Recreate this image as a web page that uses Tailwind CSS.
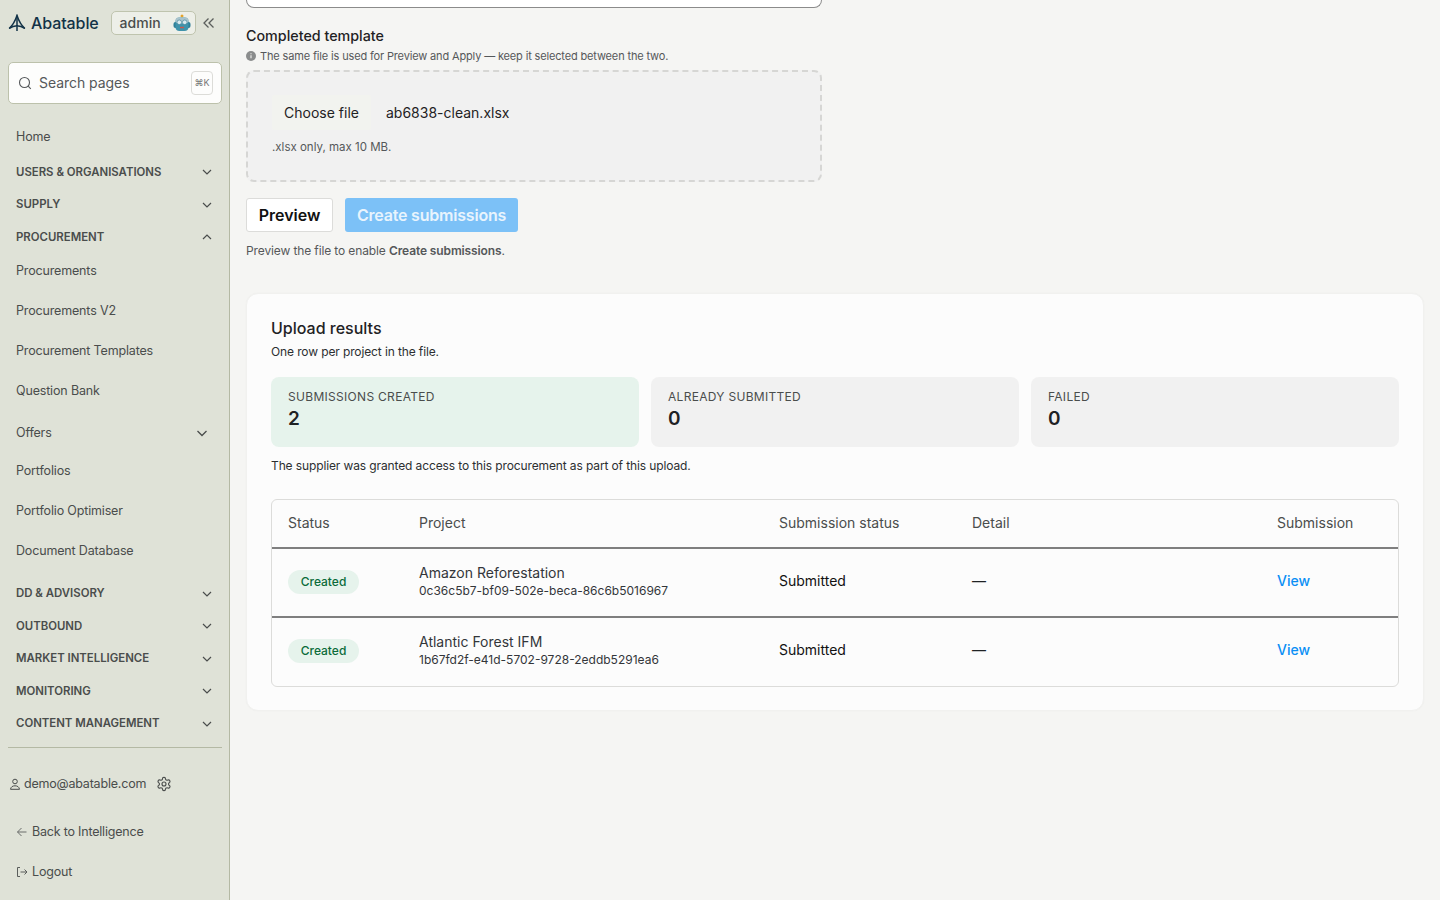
<!DOCTYPE html>
<html lang="en"><head><meta charset="utf-8"><title>Upload results</title>
<script src="https://cdn.jsdelivr.net/npm/@tailwindcss/browser@4"></script></head>
<body class="m-0 bg-[#f5f5f3] font-['Inter',sans-serif] text-[#1f2224]">
<div class="flex h-[900px] w-[1440px] overflow-hidden">
<aside class="flex h-full w-[230px] shrink-0 flex-col border-r border-[#b4b9a4] bg-[#dfe2d7] text-[#4a4d4c]">
  <div class="flex h-[46px] items-center pl-2 pr-3">
    <svg class="h-[18px] w-[18px] shrink-0" viewBox="0 0 18 18" fill="none" stroke="#123247" stroke-width="1.500"><path d="M1.200 14.500C4.500 11.500 7.500 6 9 1.500c1.500 4.500 4.500 10 7.800 13"/><path d="M1.200 14.500C4 12.500 6.500 11.800 9 11.800s5 .7 7.800 2.700"/><path d="M9 1.500V17"/></svg>
    <span class="ml-[5px] text-[16px] font-medium tracking-[-0.1px] text-[#123247]">Abatable</span>
    <div class="ml-[12px] flex h-[24px] w-[85px] items-center justify-between rounded-[5px] border border-[#bfc4ae] bg-[#edefe8] pb-[1px] pl-[8px] pr-[4px] text-[14px] font-medium text-[#4a4d4c]">admin
      <svg class="h-[18px] w-[18px]" viewBox="0 0 18 18"><circle cx="9" cy="2" r="1.500" fill="#e3a32b"/><rect x="0.500" y="8" width="17" height="6" rx="2" fill="#2e7f97"/><rect x="2.500" y="3.500" width="13" height="13.500" rx="4" fill="#3f93ab"/><rect x="2.500" y="3.500" width="13" height="6" rx="3" fill="#a9c3cc"/><circle cx="6.300" cy="8.300" r="2.300" fill="#dcebf0" stroke="#3b7f94" stroke-width=".6"/><circle cx="11.700" cy="8.300" r="2.300" fill="#dcebf0" stroke="#3b7f94" stroke-width=".6"/><path d="M7 13.500h4" stroke="#c9584c" stroke-width="1.400"/></svg>
    </div>
    <svg class="ml-[6px] h-[14px] w-[14px]" viewBox="0 0 14 14" fill="none" stroke="#5b5e5c" stroke-width="1.300"><path d="M6.500 2.500 2 7l4.500 4.500M11.500 2.500 7 7l4.500 4.500"/></svg>
  </div>
  <div class="mt-4 mr-[7px] ml-2 flex h-[42px] items-center rounded-[5px] border border-[#bcc1ab] bg-[#fdfdfc] pl-[9px] pr-2">
    <svg class="h-[14px] w-[14px]" viewBox="0 0 14 14" fill="none" stroke="#55585a" stroke-width="1.100"><circle cx="6.500" cy="6.500" r="5"/><path d="m10.200 10.200 2.600 2.600"/></svg>
    <span class="mb-[2px] ml-[7px] text-[14px] tracking-[-0.05px] text-[#55585a]">Search pages</span>
    <span class="ml-auto flex h-[24px] w-[22px] items-center justify-center rounded-[4px] border border-[#dcdcd8] text-[9px] text-[#777]">⌘K</span>
  </div>
  <nav class="mt-3 flex flex-col text-[12.500px] tracking-[-0.16px]">
    <a class="flex h-10 items-center pt-[2px] pl-4">Home</a>
    <div class="flex h-[32.500px] items-center justify-between pr-[15px] pl-4 text-[11.400px] font-semibold tracking-normal">USERS &amp; ORGANISATIONS<svg class="h-[14px] w-[14px]" viewBox="0 0 14 14" fill="none" stroke="#4a4d4c" stroke-width="1.200"><path d="m3 5 4 4 4-4"/></svg></div>
    <div class="flex h-[32.500px] items-center justify-between pr-[15px] pl-4 text-[11.400px] font-semibold tracking-normal">SUPPLY<svg class="h-[14px] w-[14px]" viewBox="0 0 14 14" fill="none" stroke="#4a4d4c" stroke-width="1.200"><path d="m3 5 4 4 4-4"/></svg></div>
    <div class="flex h-[32.500px] items-center justify-between pr-[15px] pl-4 text-[11.400px] font-semibold tracking-normal">PROCUREMENT<svg class="h-[14px] w-[14px]" viewBox="0 0 14 14" fill="none" stroke="#4a4d4c" stroke-width="1.200"><path d="m3 9 4-4 4 4"/></svg></div>
    <div class="-mt-[2px] flex flex-col">
      <a class="flex h-10 items-center pl-4">Procurements</a>
      <a class="flex h-10 items-center pl-4">Procurements V2</a>
      <a class="flex h-10 items-center pl-4">Procurement Templates</a>
      <a class="flex h-10 items-center pl-4">Question Bank</a>
      <a class="mt-[2px] -mb-[2px] flex h-10 items-center justify-between pr-[19px] pl-4">Offers<svg class="mb-[2px] h-[16px] w-[16px]" viewBox="0 0 16 16" fill="none" stroke="#4a4d4c" stroke-width="1.300"><path d="m3.500 6 4.500 4.500L12.500 6"/></svg></a>
      <a class="flex h-10 items-center pl-4">Portfolios</a>
      <a class="flex h-10 items-center pl-4">Portfolio Optimiser</a>
      <a class="flex h-10 items-center pl-4">Document Database</a>
    </div>
    <div class="mt-[6px] flex flex-col">
      <div class="flex h-[32.500px] items-center justify-between pr-[15px] pl-4 text-[11.400px] font-semibold tracking-normal">DD &amp; ADVISORY<svg class="h-[14px] w-[14px]" viewBox="0 0 14 14" fill="none" stroke="#4a4d4c" stroke-width="1.200"><path d="m3 5 4 4 4-4"/></svg></div>
      <div class="flex h-[32.500px] items-center justify-between pr-[15px] pl-4 text-[11.400px] font-semibold tracking-normal">OUTBOUND<svg class="h-[14px] w-[14px]" viewBox="0 0 14 14" fill="none" stroke="#4a4d4c" stroke-width="1.200"><path d="m3 5 4 4 4-4"/></svg></div>
      <div class="flex h-[32.500px] items-center justify-between pr-[15px] pl-4 text-[11.400px] font-semibold tracking-normal">MARKET INTELLIGENCE<svg class="h-[14px] w-[14px]" viewBox="0 0 14 14" fill="none" stroke="#4a4d4c" stroke-width="1.200"><path d="m3 5 4 4 4-4"/></svg></div>
      <div class="flex h-[32.500px] items-center justify-between pr-[15px] pl-4 text-[11.400px] font-semibold tracking-normal">MONITORING<svg class="h-[14px] w-[14px]" viewBox="0 0 14 14" fill="none" stroke="#4a4d4c" stroke-width="1.200"><path d="m3 5 4 4 4-4"/></svg></div>
      <div class="flex h-[32.500px] items-center justify-between pr-[15px] pl-4 text-[11.400px] font-semibold tracking-normal">CONTENT MANAGEMENT<svg class="h-[14px] w-[14px]" viewBox="0 0 14 14" fill="none" stroke="#4a4d4c" stroke-width="1.200"><path d="m3 5 4 4 4-4"/></svg></div>
    </div>
  </nav>
  <div class="mt-[7px] mr-[7px] ml-2 border-t border-[#b4b9a4]"></div>
  <div class="mt-[22px] flex h-[28px] items-center pl-2 text-[12.500px] tracking-[-0.2px]">
    <svg class="h-[14px] w-[14px]" viewBox="0 0 14 14" fill="none" stroke="#4a4d4c" stroke-width="1"><circle cx="7" cy="4.500" r="2.300"/><path d="M2.500 12.300c.4-2.500 2.200-3.500 4.500-3.500s4.100 1 4.500 3.500z"/></svg>
    <span class="ml-[2px]">demo@abatable.com</span>
    <svg class="ml-[10px] h-[16px] w-[16px]" viewBox="0 0 24 24" fill="none" stroke="#4a4d4c" stroke-width="1.700" stroke-linecap="round" stroke-linejoin="round"><path d="M12.220 2h-.44a2 2 0 0 0-2 2v.18a2 2 0 0 1-1 1.730l-.43.250a2 2 0 0 1-2 0l-.150-.080a2 2 0 0 0-2.730.730l-.220.380a2 2 0 0 0 .730 2.730l.150.100a2 2 0 0 1 1 1.720v.510a2 2 0 0 1-1 1.740l-.150.090a2 2 0 0 0-.730 2.730l.220.380a2 2 0 0 0 2.730.730l.150-.080a2 2 0 0 1 2 0l.430.250a2 2 0 0 1 1 1.730V20a2 2 0 0 0 2 2h.440a2 2 0 0 0 2-2v-.180a2 2 0 0 1 1-1.730l.430-.250a2 2 0 0 1 2 0l.150.080a2 2 0 0 0 2.730-.730l.220-.390a2 2 0 0 0-.730-2.730l-.150-.080a2 2 0 0 1-1-1.740v-.500a2 2 0 0 1 1-1.740l.150-.090a2 2 0 0 0 .730-2.730l-.220-.380a2 2 0 0 0-2.730-.730l-.150.080a2 2 0 0 1-2 0l-.430-.250a2 2 0 0 1-1-1.730V4a2 2 0 0 0-2-2z"/><circle cx="12" cy="12" r="3"/></svg>
  </div>
  <a class="mt-[14px] flex h-10 items-center pl-4 text-[12.500px] tracking-[-0.2px]"><svg class="h-[12px] w-[12px]" viewBox="0 0 12 12" fill="none" stroke="#6a6d6b" stroke-width="1"><path d="M10.500 6h-9M5.500 2l-4 4 4 4"/></svg><span class="ml-[4px]">Back to Intelligence</span></a>
  <a class="flex h-10 items-center pl-4 text-[12.500px] tracking-[-0.16px]"><svg class="h-[12px] w-[12px]" viewBox="0 0 12 12" fill="none" stroke="#5a5d5b" stroke-width="1"><path d="M4 1.500H1.500v9H4M4.500 6H11M8.500 3.500 11 6l-2.500 2.500"/></svg><span class="ml-[4px]">Logout</span></a>
</aside>
<main class="min-w-0 flex-1 px-4">
  <div class="h-2 w-[576px] rounded-b-[8px] border border-t-0 border-[#8b8b8b] bg-white"></div>
  <h3 class="mt-[19px] text-[14.300px] leading-[18px] font-medium">Completed template</h3>
  <p class="mt-[2px] flex h-[18px] items-center text-[11px] tracking-[-0.15px] text-[#55585a]"><svg class="mr-[4px] h-[10px] w-[10px]" viewBox="0 0 10 10"><circle cx="5" cy="5" r="5" fill="#8a8c8c"/><path d="M5 4.300v3M5 2.300v1" stroke="#f5f5f3" stroke-width="1.100"/></svg>The same file is used for Preview and Apply — keep it selected between the two.</p>
  <div class="mt-[5px] h-[112px] w-[576px] rounded-[8px] border-2 border-dashed border-[#d6d6d4] bg-[#f1f1f1] pl-[24px]">
    <div class="mt-[23px] flex items-center">
      <span class="flex h-[35px] w-[99px] items-center justify-center rounded-[2px] bg-[#f2f3ef] text-[14px] text-[#1f2224]">Choose file</span>
      <span class="ml-[15px] text-[14px] text-[#1f2224]">ab6838-clean.xlsx</span>
    </div>
    <p class="mt-[8px] text-[11.500px] leading-[18px] text-[#55585a]">.xlsx only, max 10 MB.</p>
  </div>
  <div class="mt-4 flex gap-3">
    <button class="h-[34px] w-[87px] rounded-[3px] border border-[#dcdcda] bg-white text-[16px] font-semibold text-[#111]">Preview</button>
    <button class="h-[34px] w-[173px] rounded-[3px] bg-[#7cc1f7] text-[16px] font-semibold tracking-[-0.2px] text-[#e8f4fd]">Create submissions</button>
  </div>
  <p class="mt-[10px] text-[12px] leading-[18px] tracking-[-0.12px] text-[#55585a]">Preview the file to enable <b class="font-semibold">Create submissions</b>.</p>
  <section class="mt-[33px] h-[418px] rounded-[12px] border border-[#f1f1ef] bg-[#fcfcfc] px-6 pt-[23px] shadow-[0_0_2px_rgba(0,0,0,0.03)]">
    <h2 class="text-[16px] leading-[22px] font-medium">Upload results</h2>
    <p class="mt-[4px] text-[12px] leading-[18px] tracking-[-0.12px] text-[#2c2f31]">One row per project in the file.</p>
    <div class="mt-4 grid grid-cols-3 gap-3">
      <div class="h-[70px] rounded-[8px] bg-[#e6f3ec] px-[17px] pt-[12px]"><div class="text-[12px] leading-[16px] tracking-[0.3px] text-[#4a4d4c]">SUBMISSIONS CREATED</div><div class="mt-[2px] text-[19px] leading-[24px] font-semibold">2</div></div>
      <div class="h-[70px] rounded-[8px] bg-[#f1f1f1] px-[17px] pt-[12px]"><div class="text-[12px] leading-[16px] tracking-[0.3px] text-[#4a4d4c]">ALREADY SUBMITTED</div><div class="mt-[2px] text-[19px] leading-[24px] font-semibold">0</div></div>
      <div class="h-[70px] rounded-[8px] bg-[#f1f1f1] px-[17px] pt-[12px]"><div class="text-[12px] leading-[16px] tracking-[0.3px] text-[#4a4d4c]">FAILED</div><div class="mt-[2px] text-[19px] leading-[24px] font-semibold">0</div></div>
    </div>
    <p class="mt-[10px] text-[12px] leading-[18px] tracking-[-0.12px] text-[#2c2f31]">The supplier was granted access to this procurement as part of this upload.</p>
    <div class="mt-[24px] h-[188px] rounded-[6px] border border-[#dcdcda]">
      <div class="grid h-[49px] grid-cols-[131px_360px_193px_305px_1fr] items-center border-b-2 border-[#7f7f7f] pb-[2px] pl-4 text-[14px] text-[#4a4d4c]"><span>Status</span><span>Project</span><span>Submission status</span><span>Detail</span><span>Submission</span></div>
      <div class="grid h-[69px] grid-cols-[131px_360px_193px_305px_1fr] items-center border-b-2 border-[#7f7f7f] pb-[3px] pl-4 text-[14px]">
        <span class="mt-[1px] flex h-6 w-[71px] items-center justify-center rounded-full bg-[#e6f3ec] text-[12px] font-medium text-[#0b6b3a]">Created</span>
        <div class="mt-[2px]"><div class="text-[14px] leading-[18px] text-[#33363a]">Amazon Reforestation</div><div class="text-[12px] leading-[18px] text-[#33363a]">0c36c5b7-bf09-502e-beca-86c6b5016967</div></div>
        <span class="mb-[2px] text-[#111]">Submitted</span><span class="mb-[2px]">—</span><span class="mb-[2px] font-medium text-[#0a8ff5]">View</span>
      </div>
      <div class="grid h-[68px] grid-cols-[131px_360px_193px_305px_1fr] items-center pb-[4px] pl-4 text-[14px]">
        <span class="mt-[2px] flex h-6 w-[71px] items-center justify-center rounded-full bg-[#e6f3ec] text-[12px] font-medium text-[#0b6b3a]">Created</span>
        <div class="mt-[2px]"><div class="text-[14px] leading-[18px] text-[#33363a]">Atlantic Forest IFM</div><div class="text-[12px] leading-[18px] text-[#33363a]">1b67fd2f-e41d-5702-9728-2eddb5291ea6</div></div>
        <span class="mb-[2px] text-[#111]">Submitted</span><span class="mb-[2px]">—</span><span class="mb-[2px] font-medium text-[#0a8ff5]">View</span>
      </div>
    </div>
  </section>
</main>
</div>
</body></html>
